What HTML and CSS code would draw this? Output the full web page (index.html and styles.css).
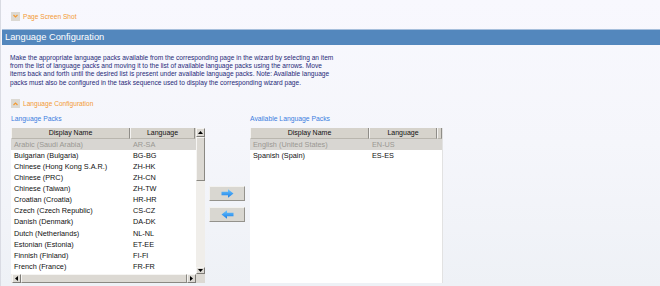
FILE: index.html
```html
<!DOCTYPE html>
<html lang="en">
<head>
    <meta charset="UTF-8">
    <title>Language Configuration</title>
    <link rel="stylesheet" href="styles.css">
</head>
<body>
    <!-- Collapsed page screen shot section -->
    <div class="toggle toggle-top">
        <span class="toggle-icon"><svg width="5" height="4" viewBox="0 0 5 4"><path d="M0.5 1 L2.5 3 L4.5 1" fill="none" stroke="#f29a33" stroke-width="1.2"/></svg></span>
        <span class="toggle-text">Page Screen Shot</span>
    </div>

    <div class="title-bar">Language Configuration</div>

    <div class="content">
        <p class="intro">Make the appropriate language packs available from the corresponding page in the wizard by selecting an item from the list of language packs and moving it to the list of available language packs using the arrows. Move items back and forth until the desired list is present under available language packs. Note: Available language packs must also be configured in the task sequence used to display the corresponding wizard page.</p>

        <div class="toggle">
            <span class="toggle-icon"><svg width="5" height="4" viewBox="0 0 5 4"><path d="M0.5 3 L2.5 1 L4.5 3" fill="none" stroke="#f29a33" stroke-width="1.2"/></svg></span>
            <span class="toggle-text">Language Configuration</span>
        </div>

        <div class="lists">
            <!-- Language packs -->
            <div class="pane pane-left">
                <div class="pane-label">Language Packs</div>
                <div class="listbox">
                    <div class="grid">
                        <div class="grid-head">
                            <div class="col-name">Display Name</div>
                            <div class="col-lang">Language</div>
                        </div>
                        <div class="grid-body" id="packs"></div>
                    </div>
                    <div class="vscroll">
                        <span class="sbtn"><svg width="5" height="3" viewBox="0 0 5 3"><path d="M0 3 L2.5 0 L5 3Z" fill="#000"/></svg></span>
                        <span class="thumb"></span>
                        <span class="track"></span>
                        <span class="sbtn"><svg width="5" height="3" viewBox="0 0 5 3"><path d="M0 0 L2.5 3 L5 0Z" fill="#000"/></svg></span>
                    </div>
                    <div class="hscroll">
                        <span class="sbtn"><svg width="3" height="5" viewBox="0 0 3 5"><path d="M3 0 L0 2.5 L3 5Z" fill="#000"/></svg></span>
                        <span class="hthumb"></span>
                        <span class="sbtn"><svg width="3" height="5" viewBox="0 0 3 5"><path d="M0 0 L3 2.5 L0 5Z" fill="#000"/></svg></span>
                    </div>
                    <div class="corner"></div>
                </div>
            </div>

            <!-- Move buttons -->
            <div class="moves">
                <button class="move-btn"><svg width="13" height="9" viewBox="0 0 13 9"><defs><linearGradient id="ar" x1="0" y1="0" x2="0" y2="1"><stop offset="0" stop-color="#6cc4ff"/><stop offset="1" stop-color="#1a7fe6"/></linearGradient></defs><path d="M0.5 2.8 H7 V0.3 L12.5 4.5 L7 8.7 V6.2 H0.5 Z" fill="url(#ar)"/></svg></button>
                <button class="move-btn"><svg width="13" height="9" viewBox="0 0 13 9"><defs><linearGradient id="al" x1="0" y1="0" x2="0" y2="1"><stop offset="0" stop-color="#6cc4ff"/><stop offset="1" stop-color="#1a7fe6"/></linearGradient></defs><path d="M12.5 2.8 H6 V0.3 L0.5 4.5 L6 8.7 V6.2 H12.5 Z" fill="url(#al)"/></svg></button>
            </div>

            <!-- Available language packs -->
            <div class="pane pane-right">
                <div class="pane-label">Available Language Packs</div>
                <div class="listbox listbox-plain">
                    <div class="grid">
                        <div class="grid-head">
                            <div class="col-name">Display Name</div>
                            <div class="col-lang">Language</div>
                            <div class="col-pad"></div>
                        </div>
                        <div class="grid-body" id="available"></div>
                    </div>
                </div>
            </div>
        </div>
    </div>

    <script>
        const packs = [
            ['Arabic (Saudi Arabia)', 'AR-SA'],
            ['Bulgarian (Bulgaria)', 'BG-BG'],
            ['Chinese (Hong Kong S.A.R.)', 'ZH-HK'],
            ['Chinese (PRC)', 'ZH-CN'],
            ['Chinese (Taiwan)', 'ZH-TW'],
            ['Croatian (Croatia)', 'HR-HR'],
            ['Czech (Czech Republic)', 'CS-CZ'],
            ['Danish (Denmark)', 'DA-DK'],
            ['Dutch (Netherlands)', 'NL-NL'],
            ['Estonian (Estonia)', 'ET-EE'],
            ['Finnish (Finland)', 'FI-FI'],
            ['French (France)', 'FR-FR']
        ];

        const available = [
            ['English (United States)', 'EN-US'],
            ['Spanish (Spain)', 'ES-ES']
        ];

        function fillList(id, list) {
            let body = document.getElementById(id);
            list.forEach((item, i) => {
                let row = document.createElement('div');
                row.className = i === 0 ? 'row row-selected' : 'row';
                row.innerHTML = `<div class="col-name">${item[0]}</div><div class="col-lang">${item[1]}</div>`;
                body.appendChild(row);
            });
        }

        fillList('packs', packs);
        fillList('available', available);
    </script>
</body>
</html>
```

FILE: styles.css
```css
body {
    margin: 0;
    height: 286px;
    overflow: hidden;
    font-family: "Liberation Sans", Arial, sans-serif;
    font-size: 7px;
    color: #111;
    background: linear-gradient(#f8f8fe 0%, #f5f6fb 50%, #eef1f6 100%);
    border-left: 1px solid #d9dbe3;
}
.toggle {
    display: flex;
    align-items: center;
    gap: 3px;
    height: 10px;
}
.toggle-top {
    padding: 11px 0 0 10px;
}
.toggle-icon {
    width: 9px;
    height: 9px;
    background-color: #dcd9d3;
    display: flex;
    align-items: center;
    justify-content: center;
}
.toggle-text {
    color: #f39a35;
    font-size: 6.6px;
}
.title-bar {
    margin: 8px 0 0 1px;
    height: 15px;
    line-height: 14px;
    background-color: #5387bd;
    border-top: 1px solid #a6bfdc;
    color: #fff;
    font-size: 9.3px;
    padding-left: 3px;
}
.content {
    padding: 9px 0 0 9px;
}
.intro {
    margin: 0;
    width: 326px;
    font-size: 6.6px;
    line-height: 8.2px;
    color: #262a78;
}
.content .toggle {
    margin-top: 12px;
    margin-left: 1px;
}
.lists {
    display: flex;
    margin-top: 5px;
}
.pane-label {
    color: #3d7ee0;
    font-size: 6.8px;
    height: 10px;
    line-height: 10px;
    margin-bottom: 4px;
}
.pane-left {
    margin-left: 1px;
}
.listbox {
    display: grid;
    grid-template-columns: 185px 9px;
    grid-template-rows: 146px 9px;
    background-color: #fff;
}
.listbox-plain {
    grid-template-columns: 192px;
    grid-template-rows: 155px;
    border-right: 1px solid #e2e2e2;
}
.grid {
    overflow: hidden;
}
.grid-head {
    display: flex;
    height: 11px;
    background-color: #d6d3cc;
}
.grid-head div {
    text-align: center;
    line-height: 10px;
    border-right: 1px solid #8f8d88;
    border-left: 1px solid #f4f3f1;
    border-bottom: 1px solid #b9b6ae;
    box-sizing: border-box;
}
.col-name {
    width: 119px;
    flex-shrink: 0;
}
.col-lang {
    width: 65px;
    flex-shrink: 0;
}
.pane-right .col-lang {
    width: 68px;
}
.col-pad {
    width: 5px;
}
.row {
    display: flex;
    height: 11.1px;
    line-height: 11px;
    font-size: 7.3px;
}
.row .col-name {
    padding-left: 3px;
    box-sizing: border-box;
}
.row .col-lang {
    padding-left: 3px;
    box-sizing: border-box;
}
.row-selected {
    background-color: #d8d6d2;
    color: #9a9893;
}
.vscroll {
    display: flex;
    flex-direction: column;
    background-color: #f0eeea;
}
.sbtn {
    width: 9px;
    height: 9px;
    box-sizing: border-box;
    background-color: #dcd9d3;
    border: 1px solid;
    border-color: #f6f5f3 #7d7b76 #7d7b76 #f6f5f3;
    display: flex;
    align-items: center;
    justify-content: center;
    flex-shrink: 0;
}
.vscroll .sbtn:last-child {
    height: 7px;
}
.thumb {
    height: 44px;
    background-color: #dcd9d3;
    border: 1px solid;
    border-color: #f6f5f3 #8a8882 #8a8882 #f6f5f3;
    box-sizing: border-box;
}
.track {
    flex-grow: 1;
}
.hscroll {
    display: flex;
    background-color: #f0eeea;
    padding-left: 1px;
}
.hthumb {
    flex-grow: 1;
    background-color: #dcd9d3;
    border: 1px solid;
    border-color: #f6f5f3 #8a8882 #8a8882 #f6f5f3;
}
.corner {
    background-color: #dcd9d3;
}
.moves {
    width: 45px;
    display: flex;
    flex-direction: column;
    gap: 6px;
    padding: 72px 0 0 4px;
    box-sizing: border-box;
}
.move-btn {
    width: 36px;
    height: 15px;
    padding: 0;
    background-color: #d9d7d1;
    border: 1px solid;
    border-color: #f3f2ef #94928c #94928c #f3f2ef;
    display: flex;
    align-items: center;
    justify-content: center;
}
```
